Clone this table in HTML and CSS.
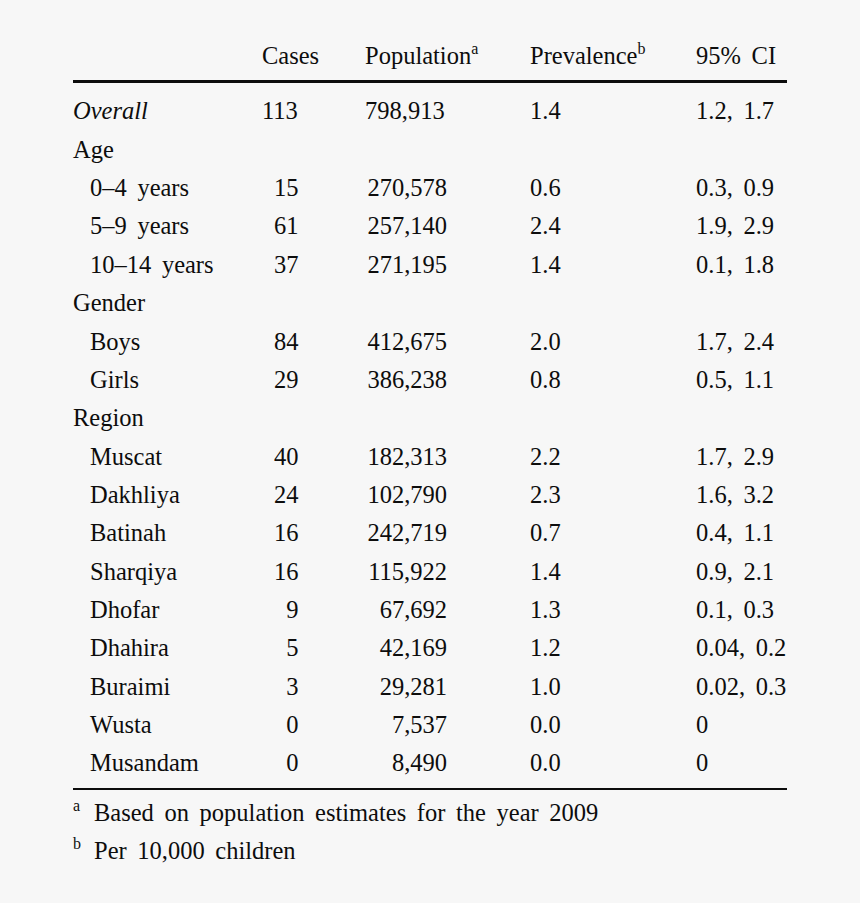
FILE: index.html
```html
<!DOCTYPE html>
<html>
<head>
<meta charset="utf-8">
<link rel="stylesheet" href="styles.css">
</head>
<body>
<div class="page">
<div class="tbl">
  <div class="row head">
    <div></div><div>Cases</div><div>Population<sup>a</sup></div><div>Prevalence<sup>b</sup></div><div>95% CI</div>
  </div>
  <div class="body">
    <div class="row"><div><i>Overall</i></div><div>113</div><div>798,913</div><div>1.4</div><div>1.2, 1.7</div></div>
    <div class="row"><div>Age</div><div></div><div></div><div></div><div></div></div>
    <div class="row"><div class="sub">0–4 years</div><div class="num">15</div><div class="num">270,578</div><div>0.6</div><div>0.3, 0.9</div></div>
    <div class="row"><div class="sub">5–9 years</div><div class="num">61</div><div class="num">257,140</div><div>2.4</div><div>1.9, 2.9</div></div>
    <div class="row"><div class="sub">10–14 years</div><div class="num">37</div><div class="num">271,195</div><div>1.4</div><div>0.1, 1.8</div></div>
    <div class="row"><div>Gender</div><div></div><div></div><div></div><div></div></div>
    <div class="row"><div class="sub">Boys</div><div class="num">84</div><div class="num">412,675</div><div>2.0</div><div>1.7, 2.4</div></div>
    <div class="row"><div class="sub">Girls</div><div class="num">29</div><div class="num">386,238</div><div>0.8</div><div>0.5, 1.1</div></div>
    <div class="row"><div>Region</div><div></div><div></div><div></div><div></div></div>
    <div class="row"><div class="sub">Muscat</div><div class="num">40</div><div class="num">182,313</div><div>2.2</div><div>1.7, 2.9</div></div>
    <div class="row"><div class="sub">Dakhliya</div><div class="num">24</div><div class="num">102,790</div><div>2.3</div><div>1.6, 3.2</div></div>
    <div class="row"><div class="sub">Batinah</div><div class="num">16</div><div class="num">242,719</div><div>0.7</div><div>0.4, 1.1</div></div>
    <div class="row"><div class="sub">Sharqiya</div><div class="num">16</div><div class="num">115,922</div><div>1.4</div><div>0.9, 2.1</div></div>
    <div class="row"><div class="sub">Dhofar</div><div class="num">9</div><div class="num">67,692</div><div>1.3</div><div>0.1, 0.3</div></div>
    <div class="row"><div class="sub">Dhahira</div><div class="num">5</div><div class="num">42,169</div><div>1.2</div><div>0.04, 0.2</div></div>
    <div class="row"><div class="sub">Buraimi</div><div class="num">3</div><div class="num">29,281</div><div>1.0</div><div>0.02, 0.3</div></div>
    <div class="row"><div class="sub">Wusta</div><div class="num">0</div><div class="num">7,537</div><div>0.0</div><div>0</div></div>
    <div class="row"><div class="sub">Musandam</div><div class="num">0</div><div class="num">8,490</div><div>0.0</div><div>0</div></div>
  </div>
</div>
<div class="notes">
  <p class="note"><sup>a</sup><span>Based on population estimates for the year 2009</span></p>
  <p class="note"><sup>b</sup><span>Per 10,000 children</span></p>
</div>
</div>
</body>
</html>
```
FILE: styles.css
```css
html, body {
  margin: 0;
  padding: 0;
  background: #f7f7f7;
}
body {
  font-family: "Liberation Serif", "Times New Roman", serif;
  color: #0d0d0d;
  font-size: 24.5px;
  word-spacing: 4.5px;
}
.page {
  width: 860px;
  height: 903px;
  padding: 37px 0 0 73px;
  box-sizing: border-box;
}
.tbl {
  width: 714px;
}
.row {
  display: grid;
  grid-template-columns: 189px 103px 165px 166px 91px;
  height: 38.35px;
  line-height: 38.35px;
  white-space: nowrap;
}
.row .num {
  text-align: right;
}
.row > .num:nth-child(2) {
  padding-right: 66.5px;
}
.row > .num:nth-child(3) {
  padding-right: 83px;
}
.row .sub {
  padding-left: 17px;
}
.head {
  box-sizing: content-box;
  padding-bottom: 5.1px;
  border-bottom: 3px solid #0d0d0d;
}
.body {
  padding: 9px 0 5.1px;
  border-bottom: 2.6px solid #0d0d0d;
}
sup {
  font-size: 16px;
  vertical-align: 10px;
  line-height: 0;
}
.notes {
  padding-top: 4px;
}
.note {
  margin: 0;
  height: 38px;
  line-height: 38px;
  display: flex;
  align-items: baseline;
}
.note sup {
  width: 21px;
  flex: none;
  vertical-align: 0;
  position: relative;
  top: -10px;
}
```
